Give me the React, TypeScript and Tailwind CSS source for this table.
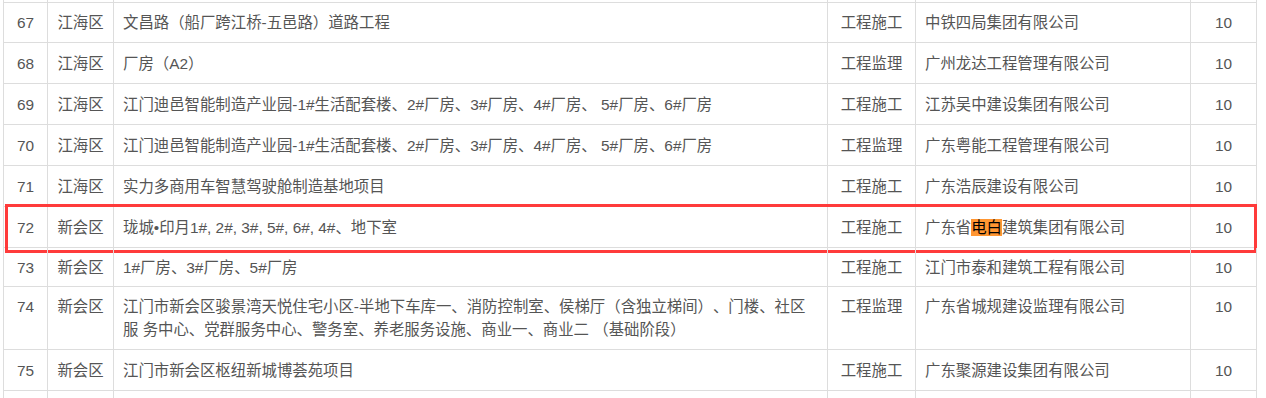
import React from "react";

type Row = {
  no: number;
  d: string;
  name: React.ReactNode;
  type: string;
  co: React.ReactNode;
  h: string;
  top?: boolean;
  mark?: boolean;
};

const rows: Row[] = [
  { no: 67, d: "江海区", name: "文昌路（船厂跨江桥-五邑路）道路工程", type: "工程施工", co: "中铁四局集团有限公司", h: "h-[40px]" },
  { no: 68, d: "江海区", name: "厂房（A2）", type: "工程监理", co: "广州龙达工程管理有限公司", h: "h-[41px]" },
  { no: 69, d: "江海区", name: "江门迪邑智能制造产业园-1#生活配套楼、2#厂房、3#厂房、4#厂房、 5#厂房、6#厂房", type: "工程施工", co: "江苏吴中建设集团有限公司", h: "h-[41px]" },
  { no: 70, d: "江海区", name: "江门迪邑智能制造产业园-1#生活配套楼、2#厂房、3#厂房、4#厂房、 5#厂房、6#厂房", type: "工程监理", co: "广东粤能工程管理有限公司", h: "h-[41px]" },
  { no: 71, d: "江海区", name: "实力多商用车智慧驾驶舱制造基地项目", type: "工程施工", co: "广东浩辰建设有限公司", h: "h-[41px]" },
  {
    no: 72,
    d: "新会区",
    name: "珑城•印月1#, 2#, 3#, 5#, 6#, 4#、地下室",
    type: "工程施工",
    co: (
      <>
        广东省<span className="bg-[#ff9632] text-black">电白</span>建筑集团有限公司
      </>
    ),
    h: "h-[41px]",
    mark: true,
  },
  { no: 73, d: "新会区", name: "1#厂房、3#厂房、5#厂房", type: "工程施工", co: "江门市泰和建筑工程有限公司", h: "h-[39px]" },
  {
    no: 74,
    d: "新会区",
    name: (
      <>
        江门市新会区骏景湾天悦住宅小区-半地下车库一、消防控制室、侯梯厅（含独立梯间）、门楼、社区
        <br />
        服 务中心、党群服务中心、警务室、养老服务设施、商业一、商业二 （基础阶段）
      </>
    ),
    type: "工程监理",
    co: "广东省城规建设监理有限公司",
    h: "h-[63px]",
    top: true,
  },
  { no: 75, d: "新会区", name: "江门市新会区枢纽新城博荟苑项目", type: "工程施工", co: "广东聚源建设集团有限公司", h: "h-[41px]" },
];

function Cells({ r }: { r?: Row }) {
  const al = r?.top ? "items-start pt-[8px]" : "items-center";
  return (
    <>
      <div className={`flex ${al} justify-center border-r border-[#dddddd]`}>{r?.no}</div>
      <div className={`flex ${al} justify-center border-r border-[#dddddd]`}>{r?.d}</div>
      <div className={`flex ${al} pl-[9px] whitespace-nowrap border-r border-[#dddddd]`}>
        <div>{r?.name}</div>
      </div>
      <div className={`flex ${al} justify-center border-r border-[#dddddd]`}>{r?.type}</div>
      <div className={`flex ${al} pl-[9px] whitespace-nowrap border-r border-[#dddddd]`}>
        <div>{r?.co}</div>
      </div>
      <div className={`flex ${al} justify-center border-r border-[#dddddd]`}>{r ? "10" : null}</div>
    </>
  );
}

const grid = "grid grid-cols-[44px_66px_714px_88px_275px_66px] border-b border-[#dddddd]";

export default function App() {
  return (
    <div className="w-[1266px] h-[398px] overflow-hidden bg-white pl-[3px] font-[family-name:'Liberation_Sans','Noto_Sans_CJK_SC',sans-serif] text-[15.4px] leading-[23px] text-[#555555] [text-spacing-trim:space-all]">
      <div className="w-[1254px] border-l border-[#dddddd]">
        <div className={`${grid} h-[3px]`}>
          <Cells />
        </div>
        {rows.map((r) => (
          <div key={r.no} className={`${grid} ${r.h} relative`}>
            <Cells r={r} />
            {r.mark && (
              <div className="absolute left-[1px] -top-[3px] right-0 h-[49px] border-[3px] border-[#ff3b3b] pointer-events-none" />
            )}
          </div>
        ))}
        <div className={`${grid} h-[40px]`}>
          <Cells />
        </div>
      </div>
    </div>
  );
}
